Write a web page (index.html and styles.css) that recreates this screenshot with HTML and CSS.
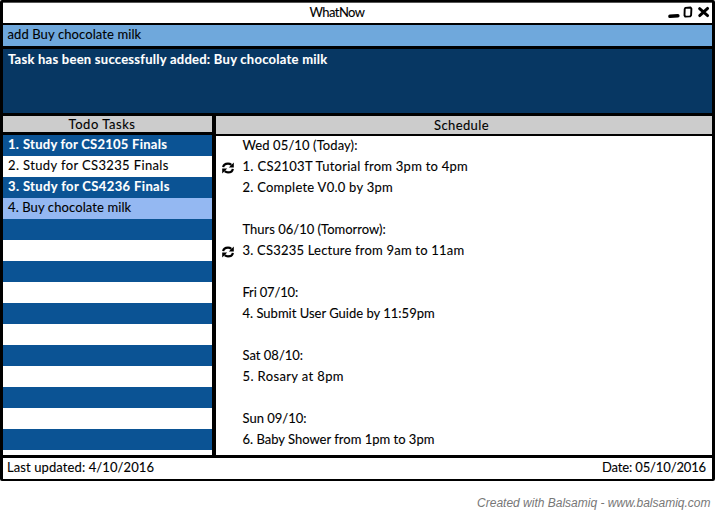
FILE: index.html
```html
<!DOCTYPE html>
<html lang="en">
<head>
<meta charset="utf-8">
<title>WhatNow</title>
<link rel="stylesheet" href="styles.css">
</head>
<body>
<svg class="defs" width="0" height="0" aria-hidden="true">
  <symbol id="repeat" viewBox="0 0 12 12">
    <path d="M1.200 5.200C1.500 2.700 3.600 1.600 6 1.600c1.400 0 2.500.5 3.300 1.200M10.800 6.800c-.3 2.500-2.400 3.600-4.800 3.600-1.400 0-2.500-.5-3.300-1.200" fill="none" stroke="#000" stroke-width="2.200"/>
    <path d="M11.800.5v4.900H6.800zM.2 11.500V6.600h5z" fill="#000"/>
  </symbol>
</svg>
<main class="window">
  <header class="titlebar">
    <h1 class="title">WhatNow</h1>
    <svg class="controls" width="44" height="18" viewBox="0 0 44 18" fill="none" stroke="#000" stroke-linecap="round" stroke-linejoin="round">
      <path d="M1.900 13.300l8-.5" stroke-width="3.400"/>
      <path d="M17.300 4.900l5.300-.4.800 1.200-.3 6.500-.9 1.200-4.900.2-.8-1.200.2-6.300z" stroke-width="1.900"/>
      <path d="M31.600 5.600l8 7M39.600 5.400l-7.900 7.200" stroke-width="2.900"/>
    </svg>
  </header>
  <div class="command fit-1">add Buy chocolate milk</div>
  <div class="feedback fit-3">Task has been successfully added: Buy chocolate milk</div>
  <div class="panels">
    <section class="todo">
      <h2 class="heading fit-5">Todo Tasks</h2>
      <ol class="tasks">
        <li class="task fit-3"><span class="num">1.</span>Study for CS2105 Finals</li>
        <li class="task fit-4">2. Study for CS3235 Finals</li>
        <li class="task fit-4">3. Study for CS4236 Finals</li>
        <li class="task selected fit-1">4. Buy chocolate milk</li>
        <li class="task"></li><li class="task"></li><li class="task"></li><li class="task"></li>
        <li class="task"></li><li class="task"></li><li class="task"></li><li class="task"></li>
        <li class="task"></li><li class="task"></li><li class="task"></li><li class="task"></li>
      </ol>
    </section>
    <section class="schedule">
      <h2 class="heading fit-4">Schedule</h2>
      <div class="days">
        <div class="day">
          <p class="line fit-1">Wed 05/10 (Today):</p>
          <p class="line fit-3"><svg class="repeat"><use href="#repeat"/></svg><span class="num">1.</span>CS2103T Tutorial from 3pm to 4pm</p>
          <p class="line fit-3">2. Complete V0.0 by 3pm</p>
        </div>
        <div class="day">
          <p class="line">Thurs 06/10 (Tomorrow):</p>
          <p class="line fit-2"><svg class="repeat"><use href="#repeat"/></svg>3. CS3235 Lecture from 9am to 11am</p>
        </div>
        <div class="day">
          <p class="line tight-2">Fri 07/10:</p>
          <p class="line">4. Submit User Guide by 11:59pm</p>
        </div>
        <div class="day">
          <p class="line">Sat 08/10:</p>
          <p class="line fit-4">5. Rosary at 8pm</p>
        </div>
        <div class="day">
          <p class="line">Sun 09/10:</p>
          <p class="line">6. Baby Shower from 1pm to 3pm</p>
        </div>
      </div>
    </section>
  </div>
  <footer class="status"><span class="fit-1">Last updated: 4/10/2016</span><span class="tight-1">Date: 05/10/2016</span></footer>
</main>
<p class="credit">Created with Balsamiq - www.balsamiq.com</p>
</body>
</html>
```
FILE: styles.css
```css
* { box-sizing: border-box; margin: 0; padding: 0; }

body {
  width: 716px;
  height: 512px;
  overflow: hidden;
  background: #fff;
  color: #000;
  font: 13px/21px Lato, "Liberation Sans", sans-serif;
  -webkit-text-stroke: 0.1px currentColor;
}

.defs { display: block; height: 0; }

.window {
  display: flex;
  flex-direction: column;
  width: 715px;
  height: 481px;
  border: 3px solid #000;
  border-top-width: 2px;
  border-bottom-width: 2px;
  border-radius: 2px;
}

.titlebar {
  display: grid;
  grid-template-columns: 44px 1fr 44px;
  height: 23px;
  border-top: 1px solid #555;
  border-bottom: 2px solid #000;
}
.title {
  grid-column: 2;
  padding-right: 41px;
  font-size: 13px;
  font-weight: 400;
  line-height: 18px;
  letter-spacing: -0.56px;
  text-align: center;
}
.controls { display: block; }

.command {
  height: 24px;
  padding-left: 4.5px;
  border-bottom: 3px solid #000;
  background: #6fa8dc;
  line-height: 18px;
}
.feedback {
  height: 67px;
  padding-left: 5px;
  border-bottom: 3px solid #000;
  background: #073763;
  color: #fff;
  font-weight: 700;
  line-height: 21px;
}

.panels { display: flex; height: 339px; }
.todo {
  width: 212px;
  border-right: 3px solid #000;
  overflow: hidden;
}
.schedule { flex: 1; border-left: 1px solid #000; }
.heading {
  height: 19px;
  border-bottom: 3px solid #000;
  background: #ccc;
  font-size: 13px;
  font-weight: 400;
  line-height: 17px;
  text-align: center;
}
.todo .heading { padding-right: 11px; }
.schedule .heading {
  height: 20px;
  padding-right: 5px;
  border-bottom-width: 2px;
  line-height: 19px;
}

.tasks { list-style: none; height: 320px; overflow: hidden; }
.task {
  height: 21px;
  padding-left: 5px;
  line-height: 19px;
  white-space: nowrap;
}
.task:nth-child(odd) { background: #0b5394; color: #fff; font-weight: 700; }
.task.selected { background: #94b8f2; }
.num { display: inline-block; width: 15px; }

.days { display: flex; flex-direction: column; gap: 21px; padding-left: 26.500px; }
.line { position: relative; height: 21px; line-height: 19px; white-space: nowrap; }
.repeat { position: absolute; left: -21px; top: 5px; width: 12px; height: 12px; }

.status {
  display: flex;
  justify-content: space-between;
  height: 24px;
  padding: 0 6px 0 4px;
  border-top: 3px solid #000;
  line-height: 18px;
}

.credit {
  margin-top: 13px;
  padding-right: 5.500px;
  color: #777;
  font: italic 12px/18px "Liberation Sans", Arial, sans-serif;
  text-align: right;
  -webkit-text-stroke: 0;
}

.fit-1 { letter-spacing: 0.1px; }
.fit-2 { letter-spacing: 0.2px; }
.fit-3 { letter-spacing: 0.25px; }
.fit-4 { letter-spacing: 0.37px; }
.fit-5 { letter-spacing: 0.54px; }
.tight-1 { letter-spacing: -0.14px; }
.tight-2 { letter-spacing: -0.18px; }
```
